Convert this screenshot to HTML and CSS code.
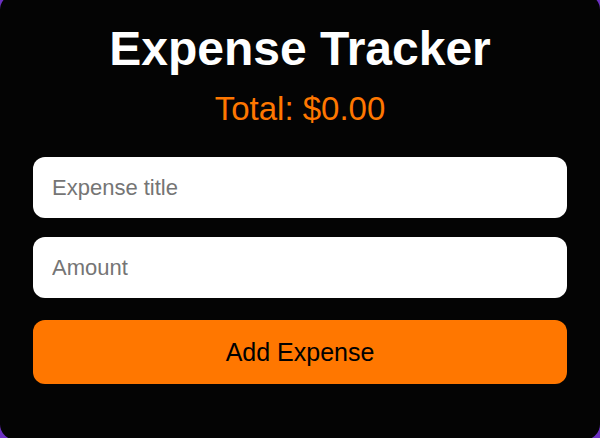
FILE: index.html
```html
<!DOCTYPE html>
<html lang="en">
<head>
<meta charset="utf-8">
<title>Expense Tracker</title>
<link rel="stylesheet" href="styles.css">
</head>
<body>
<main class="card">
  <h1 class="title">Expense Tracker</h1>
  <p class="total">Total: $0.00</p>
  <form class="form">
    <input class="field" type="text" placeholder="Expense title">
    <input class="field" type="text" placeholder="Amount">
    <button class="add-btn" type="button">Add Expense</button>
  </form>
</main>
</body>
</html>
```

FILE: styles.css
```css
html, body {
  margin: 0;
  padding: 0;
  height: 100%;
  overflow: hidden;
}

body {
  background: #6c31c2;
  font-family: "Liberation Sans", Arial, sans-serif;
}

.card {
  box-sizing: border-box;
  margin-top: -6px;
  height: 446px;
  background: #040404;
  border-radius: 16px;
  padding: 27px 33px 0;
  display: flex;
  flex-direction: column;
  text-align: center;
}

.title {
  margin: 0;
  font-size: 48px;
  font-weight: bold;
  color: #ffffff;
  line-height: 55px;
}

.total {
  margin: 14px 0 0;
  font-size: 33px;
  line-height: 37px;
  color: #ff7700;
}

.form {
  margin-top: 30px;
  display: flex;
  flex-direction: column;
}

.field {
  box-sizing: border-box;
  height: 61px;
  border: none;
  border-radius: 12px;
  background: #ffffff;
  padding: 0 19px;
  font-family: "Liberation Sans", Arial, sans-serif;
  font-size: 22px;
  color: #222;
  outline: none;
  margin-bottom: 19px;
}

.field::placeholder {
  color: #757575;
}

.field + .field {
  margin-bottom: 22px;
}

.add-btn {
  height: 64px;
  border: none;
  border-radius: 12px;
  background: #ff7700;
  color: #000000;
  font-family: "Liberation Sans", Arial, sans-serif;
  font-size: 25px;
  cursor: pointer;
}
```
